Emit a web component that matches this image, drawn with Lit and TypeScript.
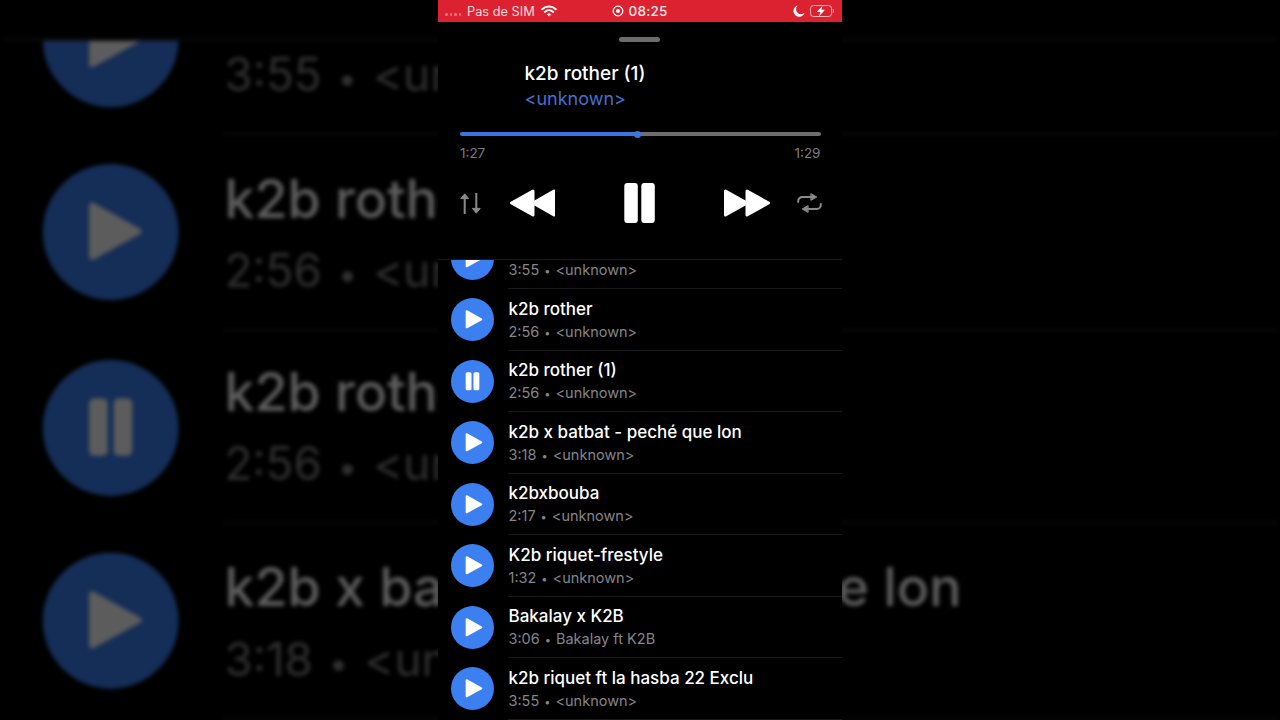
import { LitElement, html, css, svg } from "lit";
import { customElement } from "lit/decorators.js";

const tracks = [
  { t: "", d: "3:55", a: "<unknown>" },
  { t: "k2b rother", d: "2:56", a: "<unknown>" },
  { t: "k2b rother (1)", d: "2:56", a: "<unknown>", on: true },
  { t: "k2b x batbat - peché que lon", d: "3:18", a: "<unknown>" },
  { t: "k2bxbouba", d: "2:17", a: "<unknown>" },
  { t: "K2b riquet-frestyle", d: "1:32", a: "<unknown>" },
  { t: "Bakalay x K2B", d: "3:06", a: "Bakalay ft K2B" },
  { t: "k2b riquet ft la hasba 22 Exclu", d: "3:55", a: "<unknown>" },
];

const tri = (x1: number, x2: number, dir: number) =>
  dir > 0
    ? svg`<path d="M${x1} 2 L${x2} 14 L${x1} 26 Z" />`
    : svg`<path d="M${x2} 2 L${x1} 14 L${x2} 26 Z" />`;

@customElement("app-root")
export class AppRoot extends LitElement {
  static styles = css`
    :host {
      display: block;
      position: relative;
      width: 1280px;
      height: 720px;
      overflow: hidden;
      background: #000;
      font-family: Inter, "Liberation Sans", sans-serif;
    }
    .backdrop {
      position: absolute;
      inset: 0;
      display: flex;
      justify-content: center;
      transform: scale(3.16);
      transform-origin: 640px 360px;
      opacity: 0.36;
      filter: blur(0.6px);
    }
    .front {
      position: absolute;
      inset: 0;
      display: flex;
      justify-content: center;
    }
    .screen {
      position: relative;
      width: 404px;
      height: 720px;
      overflow: hidden;
      background: #000;
      color: #fff;
    }
    .head {
      position: relative;
      z-index: 1;
      box-sizing: border-box;
      height: 260px;
      background: #000;
      border-bottom: 1px solid #1a1a1c;
      display: flex;
      flex-direction: column;
      margin-bottom: -32.5px;
    }
    .head.ghost { height: 259px; margin-bottom: -31.5px; }
    .status {
      height: 22px;
      background: #dc2230;
      display: grid;
      grid-template-columns: 1fr auto 1fr;
      align-items: center;
      padding: 0 8px 0 7px;
      font-size: 12.8px;
      color: #f8dcdc;
    }
    .st-l, .st-r, .st-c { display: flex; align-items: center; }
    .st-r { justify-content: flex-end; gap: 5px; }
    .dots { display: flex; gap: 2px; margin: 7px 6px 0 0; }
    .dots i { width: 2.5px; height: 2.5px; border-radius: 50%; background: #ec6f76; }
    .wifi { margin-left: 6px; }
    .st-c { gap: 5px; color: #fbeaea; font-weight: 500; font-size: 13.5px; letter-spacing: 0.2px; }
    .handle {
      width: 41px;
      height: 5px;
      border-radius: 3px;
      background: #6c6c6e;
      align-self: center;
      margin: 15px 2px 0 0;
    }
    .now { margin: 19px 0 0 86.5px; }
    .now .t { font-size: 19px; font-weight: 500; line-height: 25px; }
    .now .a { font-size: 18px; line-height: 24px; margin-top: 1px; color: #4670cf; }
    .bar {
      display: flex;
      align-items: center;
      height: 6px;
      margin: 20px 21px 0 21.5px;
    }
    .bar .done { width: 178px; height: 4px; background: #3a74de; border-radius: 2px 0 0 2px; }
    .bar .thumb { width: 7px; height: 7px; border-radius: 50%; background: #3a74de; margin: 0 -3.5px; position: relative; }
    .bar .rest { flex: 1; height: 4px; background: #6e6e6e; border-radius: 0 2px 2px 0; }
    .times {
      display: flex;
      justify-content: space-between;
      margin: 8px 21.5px 0 22px;
      font-size: 13.5px;
      line-height: 16px;
      color: #7c7c80;
    }
    .ctrl {
      display: flex;
      align-items: center;
      justify-content: space-between;
      margin: 22px 20px 0 22px;
      height: 40px;
    }
    .ctrl svg { display: block; flex: none; }
    .mid { display: flex; align-items: center; gap: 68.5px; margin-left: 1px; }
    .row {
      box-sizing: border-box;
      height: 61.5px;
      display: flex;
      align-items: center;
      padding-left: 12.6px;
      gap: 14.9px;
    }
    .ball {
      flex: none;
      width: 43px;
      height: 43px;
      border-radius: 50%;
      background: #3b7ff1;
      display: block;
    }
    .body {
      flex: 1;
      box-sizing: border-box;
      height: 100%;
      border-bottom: 1px solid #1a1a1c;
      display: flex;
      flex-direction: column;
      justify-content: center;
      padding-top: 2px;
      min-width: 0;
    }
    .name { font-size: 17px; font-weight: 500; line-height: 22px; min-height: 22px; white-space: nowrap; }
    .sub { font-size: 14.5px; line-height: 20px; color: #85858a; white-space: nowrap; margin-top: 2px; }
    .sub b { font-weight: 400; font-size: 11px; margin: 0 5px; }
  `;

  private ball(on: boolean | undefined) {
    return html`<svg class="ball" viewBox="0 0 44 44">
      ${on
        ? svg`<rect x="15" y="12.5" width="6" height="18.5" rx="1.6" fill="#fff"/><rect x="23" y="12.5" width="6" height="18.5" rx="1.6" fill="#fff"/>`
        : svg`<path d="M16 13.5 L31 21.8 L16 30 Z" fill="#fff" stroke="#fff" stroke-width="2" stroke-linejoin="round"/>`}
    </svg>`;
  }

  private player() {
    return html`
      <div class="status">
        <div class="st-l">
          <span class="dots"><i></i><i></i><i></i><i></i></span>
          <span>Pas de SIM</span>
          <svg class="wifi" width="16" height="12" viewBox="0 0 16 12" fill="none" stroke="#fff" stroke-width="2" stroke-linecap="round">
            <path d="M1.2 4.2 C5 .6 11 .6 14.8 4.2" />
            <path d="M3.8 6.9 C6.2 4.8 9.8 4.8 12.2 6.9" />
            <path d="M8 11 L6.3 9.3 C7.3 8.5 8.7 8.5 9.7 9.3 Z" fill="#fff" stroke-width=".6" />
          </svg>
        </div>
        <div class="st-c">
          <svg width="12" height="12" viewBox="0 0 12 12">
            <circle cx="6" cy="6" r="4.8" fill="none" stroke="#fff" stroke-width="1.3" />
            <circle cx="6" cy="6" r="2" fill="#fff" />
          </svg>
          <span>08:25</span>
        </div>
        <div class="st-r">
          <svg width="12" height="12" viewBox="0 0 12 12">
            <path d="M4.6 .6 A5.7 5.7 0 1 0 11.6 7.8 A5 5 0 0 1 4.6 .6 Z" fill="#fff" />
          </svg>
          <svg width="24" height="12" viewBox="0 0 24 12">
            <rect x=".5" y=".5" width="21" height="11" rx="3" fill="none" stroke="#f3b4b8" />
            <path d="M22.8 4 C23.6 4.4 23.6 7.6 22.8 8" fill="none" stroke="#f3b4b8" />
            <path d="M12.6 .6 L6.8 7 H10.4 L9 11.4 L15 4.8 H11.4 Z" fill="#fff" />
          </svg>
        </div>
      </div>
      <div class="handle"></div>
      <div class="now">
        <div class="t">k2b rother (1)</div>
        <div class="a">&lt;unknown&gt;</div>
      </div>
      <div class="bar">
        <div class="done"></div><div class="thumb"></div><div class="rest"></div>
      </div>
      <div class="times"><span>1:27</span><span>1:29</span></div>
      <div class="ctrl">
        <svg width="21" height="21" viewBox="0 0 21 21" fill="#8a8a8c" stroke="#8a8a8c" stroke-linejoin="round">
          <path d="M4.7 20.5 V3" stroke-width="2" stroke-linecap="round" />
          <path d="M4.7 .8 L8.6 5.6 H.8 Z" stroke-width="1" />
          <path d="M16.3 .5 V18" stroke-width="2" stroke-linecap="round" />
          <path d="M16.3 20.2 L20.2 15.4 H12.4 Z" stroke-width="1" />
        </svg>
        <div class="mid">
          <svg width="46" height="28" viewBox="0 0 46 28" fill="#fff" stroke="#fff" stroke-width="3" stroke-linejoin="round">
            ${tri(2.5, 24, -1)}${tri(24, 45, -1)}
          </svg>
          <svg width="32" height="40" viewBox="0 0 32 40" fill="#fff">
            <rect x=".3" y="0" width="13.5" height="40" rx="3" />
            <rect x="17.3" y="0" width="13.5" height="40" rx="3" />
          </svg>
          <svg width="46" height="28" viewBox="0 0 46 28" fill="#fff" stroke="#fff" stroke-width="3" stroke-linejoin="round">
            ${tri(1.5, 23, 1)}${tri(23, 44.5, 1)}
          </svg>
        </div>
        <svg width="25" height="20" viewBox="0 0 25 20" fill="none" stroke="#8a8a8c" stroke-width="2" stroke-linecap="round">
          <path d="M1.2 9 V8 A4 4 0 0 1 5.2 4 H15" />
          <path d="M14.2 .8 L19.8 4 L14.2 7.2 Z" fill="#8a8a8c" stroke-width="1" stroke-linejoin="round" />
          <path d="M23.8 11 V12 A4 4 0 0 1 19.8 16 H10" />
          <path d="M10.8 12.8 L5.2 16 L10.8 19.2 Z" fill="#8a8a8c" stroke-width="1" stroke-linejoin="round" />
        </svg>
      </div>
    `;
  }

  private list(rows: typeof tracks) {
    return html`<div class="list">
      ${rows.map(
        (r) => html`<div class="row">
          ${this.ball(r.on)}
          <div class="body">
            <div class="name">${r.t}</div>
            <div class="sub">${r.d}<b>•</b>${r.a}</div>
          </div>
        </div>`
      )}
    </div>`;
  }

  render() {
    return html`
      <div class="backdrop" aria-hidden="true">
        <div class="screen"><div class="head ghost"></div>${this.list(tracks.slice(0, 4))}</div>
      </div>
      <div class="front">
        <div class="screen"><div class="head">${this.player()}</div>${this.list(tracks)}</div>
      </div>
    `;
  }
}
